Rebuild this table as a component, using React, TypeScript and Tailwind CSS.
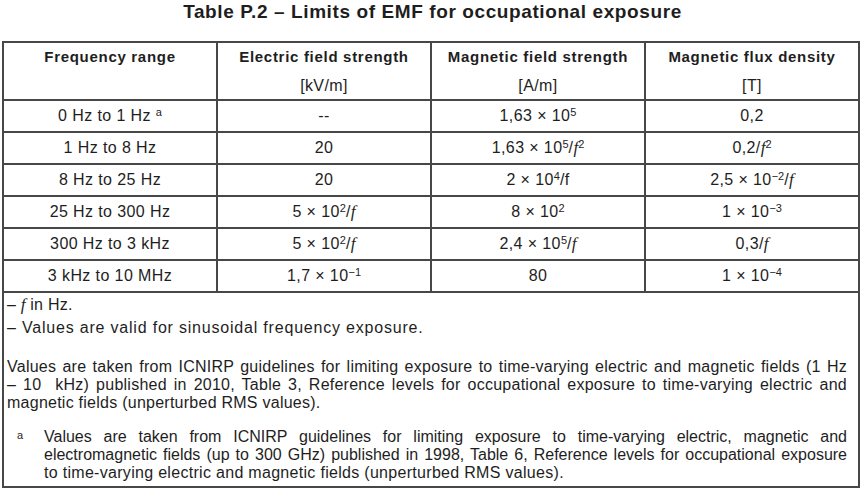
const F = () => <i className="font-['Liberation_Serif'] text-[17px] tracking-normal">f</i>;

const Sup = ({ children }: { children: React.ReactNode }) => (
  <sup className="text-[11px] tracking-normal">{children}</sup>
);

// one justified line, stretched to full width
const J = ({ children }: { children: React.ReactNode }) => (
  <span className="block text-justify [text-align-last:justify]">{children}</span>
);

const rows: [React.ReactNode, React.ReactNode, React.ReactNode, React.ReactNode][] = [
  [<>0 Hz to 1 Hz <Sup>a</Sup></>, "--", <>1,63 × 10<Sup>5</Sup></>, "0,2"],
  ["1 Hz to 8 Hz", "20", <>1,63 × 10<Sup>5</Sup>/<F /><Sup>2</Sup></>, <>0,2/<F /><Sup>2</Sup></>],
  ["8 Hz to 25 Hz", "20", <>2 × 10<Sup>4</Sup>/f</>, <>2,5 × 10<Sup>−2</Sup>/<F /></>],
  ["25 Hz to 300 Hz", <>5 × 10<Sup>2</Sup>/<F /></>, <>8 × 10<Sup>2</Sup></>, <>1 × 10<Sup>−3</Sup></>],
  ["300 Hz to 3 kHz", <>5 × 10<Sup>2</Sup>/<F /></>, <>2,4 × 10<Sup>5</Sup>/<F /></>, <>0,3/<F /></>],
  ["3 kHz to 10 MHz", <>1,7 × 10<Sup>−1</Sup></>, "80", <>1 × 10<Sup>−4</Sup></>],
];

const headers = [
  ["Frequency range", ""],
  ["Electric field strength", "[kV/m]"],
  ["Magnetic field strength", "[A/m]"],
  ["Magnetic flux density", "[T]"],
];

export default function App() {
  return (
    <div className="w-[865px] h-[490px] bg-white text-[#1e1e1e] font-['Liberation_Sans',Arial,sans-serif] overflow-hidden">
      <h1 className="text-center font-bold text-[19px] tracking-[0.6px] leading-[24px] h-[41px]">
        Table P.2 – Limits of EMF for occupational exposure
      </h1>
      <table className="ml-[2px] w-[858px] border-collapse table-fixed text-[16px] tracking-[0.4px]">
        <thead>
          <tr className="h-[58px]">
            {headers.map(([a, b], i) => (
              <th key={i} className="border-2 border-[#474747] align-top pt-[5px] font-normal">
                <div className="font-bold text-[15px] tracking-[0.7px] leading-[18px]">{a}</div>
                <div className="leading-[18px] mt-[11px]">{b}</div>
              </th>
            ))}
          </tr>
        </thead>
        <tbody>
          {rows.map((r, i) => (
            <tr key={i} className="h-[32px]">
              {r.map((c, j) => (
                <td key={j} className="border-2 border-[#474747] text-center align-middle leading-[20px]">
                  {c}
                </td>
              ))}
            </tr>
          ))}
          <tr className="h-[195px]">
            <td colSpan={4} className="border-2 border-[#474747] align-top pl-[3px] pr-[11px] pt-[3px] leading-[18px] tracking-[0.25px]">
              <p>– <F /> in Hz.</p>
              <p className="mt-[5px] tracking-[0.8px]">– Values are valid for sinusoidal frequency exposure.</p>
              <p className="mt-[21px]">
                <J>Values are taken from ICNIRP guidelines for limiting exposure to time-varying electric and magnetic fields (1 Hz</J>
                <J>– 10&nbsp; kHz) published in 2010, Table 3, Reference levels for occupational exposure to time-varying electric and</J>
                <span className="block">magnetic fields (unperturbed RMS values).</span>
              </p>
              <div className="flex mt-[16px]">
                <span className="w-[37px] pl-[10px] text-[11px] leading-[14px] shrink-0">a</span>
                <p className="flex-1 min-w-0 tracking-[0px]">
                  <J>Values are taken from ICNIRP guidelines for limiting exposure to time-varying electric, magnetic and</J>
                  <J>electromagnetic fields (up to 300 GHz) published in 1998, Table 6, Reference levels for occupational exposure</J>
                  <span className="block tracking-[0.3px]">to time-varying electric and magnetic fields (unperturbed RMS values).</span>
                </p>
              </div>
            </td>
          </tr>
        </tbody>
      </table>
    </div>
  );
}
